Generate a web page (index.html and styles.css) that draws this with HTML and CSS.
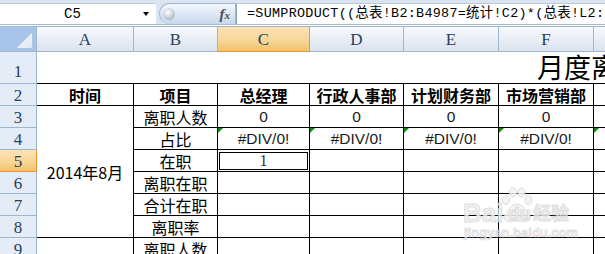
FILE: index.html
```html
<!DOCTYPE html>
<html lang="zh-CN">
<head>
    <meta charset="UTF-8">
    <meta name="viewport" content="width=device-width, initial-scale=1.0">
    <title>月度离职统计</title>
    <link rel="stylesheet" href="styles.css">
</head>
<body>

<div id="app">
    <div class="formula-bar">
        <div class="name-box">
            <span class="cell-ref">C5</span>
            <span class="drop-arrow"></span>
        </div>
        <div class="fx-pill">
            <span class="knob"></span>
            <span class="fx">f<span class="fx-x">x</span></span>
        </div>
        <div class="formula">=SUMPRODUCT((总表!B2:B4987=统计!C2)*(总表!L2:L4987=统计!$A$3))</div>
    </div>

    <div class="sheet">
        <!-- column headers -->
        <div class="corner"></div>
        <div class="col-head">A</div>
        <div class="col-head">B</div>
        <div class="col-head active">C</div>
        <div class="col-head">D</div>
        <div class="col-head">E</div>
        <div class="col-head">F</div>
        <div class="col-head">G</div>

        <!-- row 1 -->
        <div class="row-head tall">1</div>
        <div class="title-cell">月度离职统计表</div>

        <!-- row 2 -->
        <div class="row-head">2</div>
        <div class="cell head">时间</div>
        <div class="cell head">项目</div>
        <div class="cell head">总经理</div>
        <div class="cell head">行政人事部</div>
        <div class="cell head">计划财务部</div>
        <div class="cell head">市场营销部</div>
        <div class="cell head"></div>

        <!-- row 3 -->
        <div class="row-head">3</div>
        <div class="cell period">2014年8月</div>
        <div class="cell">离职人数</div>
        <div class="cell num">0</div>
        <div class="cell num">0</div>
        <div class="cell num">0</div>
        <div class="cell num">0</div>
        <div class="cell"></div>

        <!-- row 4 -->
        <div class="row-head">4</div>
        <div class="cell">占比</div>
        <div class="cell num err">#DIV/0!</div>
        <div class="cell num err">#DIV/0!</div>
        <div class="cell num err">#DIV/0!</div>
        <div class="cell num err">#DIV/0!</div>
        <div class="cell err"></div>

        <!-- row 5 -->
        <div class="row-head active">5</div>
        <div class="cell">在职</div>
        <div class="cell selected">1</div>
        <div class="cell"></div>
        <div class="cell"></div>
        <div class="cell"></div>
        <div class="cell"></div>

        <!-- row 6 -->
        <div class="row-head">6</div>
        <div class="cell">离职在职</div>
        <div class="cell"></div>
        <div class="cell"></div>
        <div class="cell"></div>
        <div class="cell"></div>
        <div class="cell"></div>

        <!-- row 7 -->
        <div class="row-head">7</div>
        <div class="cell">合计在职</div>
        <div class="cell"></div>
        <div class="cell"></div>
        <div class="cell"></div>
        <div class="cell"></div>
        <div class="cell"></div>

        <!-- row 8 -->
        <div class="row-head">8</div>
        <div class="cell">离职率</div>
        <div class="cell"></div>
        <div class="cell"></div>
        <div class="cell"></div>
        <div class="cell"></div>
        <div class="cell"></div>

        <!-- row 9 -->
        <div class="row-head">9</div>
        <div class="cell"></div>
        <div class="cell">离职人数</div>
        <div class="cell"></div>
        <div class="cell"></div>
        <div class="cell"></div>
        <div class="cell"></div>
        <div class="cell"></div>
    </div>

    <div class="watermark">
        <span class="wm-bai">Bai</span>
        <svg class="wm-paw" width="34" height="36" viewBox="0 0 34 36">
            <ellipse cx="6" cy="13" rx="3.6" ry="4.6"/>
            <ellipse cx="13" cy="5.5" rx="3.6" ry="4.6"/>
            <ellipse cx="21.5" cy="5.5" rx="3.6" ry="4.6"/>
            <ellipse cx="28.5" cy="13" rx="3.6" ry="4.6"/>
            <path d="M17 17 C11 17 9 23 5 27 C2 31 5 35 10 34.5 C14 34 20 34 24 34.5 C29 35 32 31 29 27 C25 23 23 17 17 17 Z"/>
        </svg>
        <span class="wm-du">du</span>
        <span class="wm-jy">经验</span>
        <span class="wm-url">jingyan.baidu.com</span>
    </div>
</div>

</body>
</html>
```

FILE: styles.css
```css
* {
    box-sizing: border-box;
}
body {
    margin: 0;
    background-color: #fff;
    font-family: "Noto Sans CJK SC", sans-serif;
    overflow: hidden;
}
#app {
    position: relative;
    width: 605px;
    height: 254px;
    overflow: hidden;
}

/* formula bar */
.formula-bar {
    display: flex;
    height: 25px;
    padding-top: 3px;
    background-color: #dbe5f2;
    border-bottom: 1px solid #a7bbd3;
}
.name-box {
    display: flex;
    align-items: center;
    width: 156px;
    background-color: #fff;
    border-top: 1px solid #b9c9dd;
}
.cell-ref {
    flex: 1;
    text-align: center;
    font-family: "Liberation Mono", monospace;
    font-size: 14px;
    color: #000;
    padding-left: 2px;
}
.drop-arrow {
    width: 0;
    height: 0;
    margin-right: 7px;
    border-left: 3px solid transparent;
    border-right: 3px solid transparent;
    border-top: 4px solid #000;
}
.fx-pill {
    display: flex;
    align-items: center;
    justify-content: space-between;
    width: 77px;
    margin-left: 3px;
    padding: 0 5px 0 3px;
    background: linear-gradient(#f4f8fd, #dbe6f4 55%, #c6d7ee);
    border: 1px solid #9fb4cf;
    border-bottom: none;
    border-radius: 11px 0 0 11px;
}
.knob {
    width: 12px;
    height: 12px;
    border-radius: 50%;
    background: radial-gradient(circle at 40% 35%, #fff, #c5ccd6 55%, #8e98a6);
}
.fx {
    font-family: "Liberation Serif", serif;
    font-style: italic;
    font-weight: bold;
    font-size: 15px;
    color: #4d4d4d;
    line-height: 1;
}
.fx-x {
    font-size: 11px;
}
.formula {
    flex: 1;
    padding-left: 10px;
    background-color: #fff;
    border-top: 1px solid #b9c9dd;
    border-left: 1px solid #8ea6c4;
    font-family: "Liberation Mono", "Noto Sans CJK SC", monospace;
    font-size: 13.4px;
    letter-spacing: 0.3px;
    line-height: 20px;
    white-space: nowrap;
    overflow: hidden;
    color: #000;
}

/* sheet grid */
.sheet {
    display: grid;
    grid-template-columns: 37px 97px 84px 92px 94px 95px 95px 100px;
    grid-template-rows: 25px 32px repeat(8, 22px);
    margin-top: 1px;
    border-top: 1px solid #9eb6ce;
}
.sheet > div {
    display: flex;
    align-items: center;
    justify-content: center;
    line-height: 1;
}
.corner {
    position: relative;
    background-color: #a9c4e9;
    border-right: 1px solid #9eb6ce;
    border-bottom: 1px solid #9eb6ce;
}
.corner::after {
    content: "";
    position: absolute;
    left: 17px;
    top: 6px;
    width: 15px;
    height: 15px;
    background: linear-gradient(135deg, #ffffff, #dde6f1);
    clip-path: polygon(100% 0, 100% 100%, 0 100%);
}
.col-head {
    background: linear-gradient(#f8fafd, #e6ecf4 60%, #dae3ee);
    border-right: 1px solid #9eb6ce;
    border-bottom: 1px solid #9eb6ce;
    font-family: "Liberation Serif", serif;
    font-size: 17px;
    color: #27415f;
}
.col-head.active {
    background: linear-gradient(#fbe3b4, #f8d798 55%, #f1c26a);
    border-right-color: #f29436;
    border-bottom-color: #f29436;
}
.row-head {
    background-color: #e4ecf7;
    border-right: 1px solid #9eb6ce;
    border-bottom: 1px solid #9eb6ce;
    font-family: "Liberation Serif", serif;
    font-size: 17px;
    color: #27415f;
    padding-top: 2px;
}
.row-head.tall {
    align-items: flex-end !important;
    padding-bottom: 3px;
}
.row-head.active {
    background: linear-gradient(#fbe3b4, #f8d798 55%, #f1c26a);
    border-bottom-color: #f29436;
    border-right-color: #f29436;
}
.title-cell {
    grid-column: 2 / 9;
    justify-content: flex-start !important;
    align-items: flex-end !important;
    padding-left: 500px;
    padding-bottom: 3px;
    border-bottom: 1px solid #000;
    font-size: 27px;
    color: #000;
    white-space: nowrap;
}
.cell {
    position: relative;
    border-right: 1px solid #000;
    border-bottom: 1px solid #000;
    font-size: 16px;
    color: #000;
    white-space: nowrap;
}
.cell.head {
    font-weight: bold;
}
.cell.period {
    grid-row: span 6;
}
.cell.num {
    font-family: "Liberation Sans", sans-serif;
    font-size: 15.5px;
    color: #1a1a1a;
}
.cell.err::before {
    content: "";
    position: absolute;
    left: 0;
    top: 0;
    border-top: 5px solid #118a11;
    border-right: 5px solid transparent;
}
.cell.selected {
    font-family: "Liberation Serif", serif;
    color: #333;
}
.cell.selected::after {
    content: "";
    position: absolute;
    left: 1px;
    top: 2px;
    right: 1px;
    bottom: 1px;
    border: 1px solid #000;
}

/* watermark */
.watermark {
    position: absolute;
    left: 462px;
    top: 186px;
    width: 116px;
    height: 58px;
    font-family: "Liberation Sans", sans-serif;
    font-weight: bold;
    color: rgba(240, 240, 240, 0.85);
    -webkit-text-stroke: 1px rgba(200, 200, 200, 0.55);
    pointer-events: none;
}
.watermark span {
    position: absolute;
    line-height: 1;
}
.wm-bai {
    left: 1px;
    top: 14px;
    font-size: 26px;
}
.wm-paw {
    position: absolute;
    left: 38px;
    top: 1px;
    fill: rgba(242, 242, 242, 0.85);
    stroke: rgba(200, 200, 200, 0.55);
    stroke-width: 1;
}
.wm-du {
    left: 46px;
    top: 18px;
    font-size: 19px;
}
.wm-jy {
    left: 71px;
    top: 17px;
    font-family: "Noto Sans CJK SC", sans-serif;
    font-size: 18px;
}
.wm-url {
    left: 2px;
    top: 40px;
    font-size: 13px;
    -webkit-text-stroke: 0.8px rgba(200, 200, 200, 0.55);
}
```
